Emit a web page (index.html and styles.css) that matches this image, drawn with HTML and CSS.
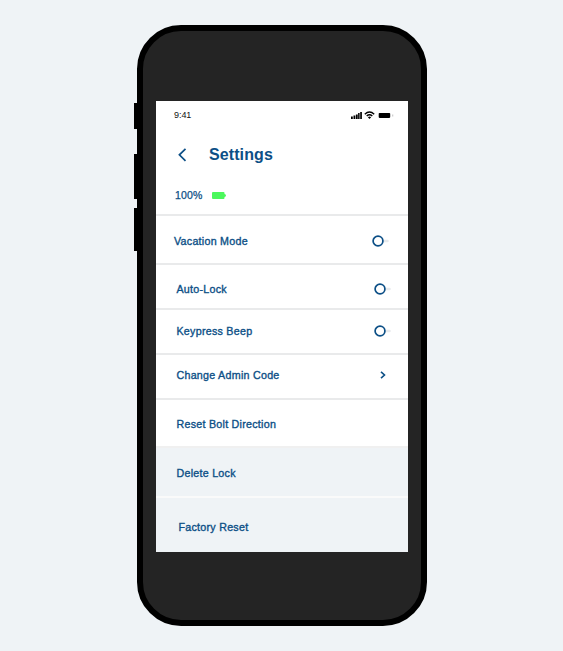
FILE: index.html
```html
<!DOCTYPE html>
<html lang="en">
<head>
<meta charset="utf-8">
<title>Settings</title>
<link rel="stylesheet" href="styles.css">
</head>
<body>
<div class="phone">
  <i class="key key-mute"></i><i class="key key-up"></i><i class="key key-down"></i>
  <main class="screen">
    <div class="status">
      <span class="time">9:41</span>
      <svg class="status-icons" width="43" height="9" viewBox="0 0 43 9">
        <path d="M0 5.500h1.800V8H0zM2.500 4.600h1.800V8H2.500zM4.900 3.500h1.800V8H4.900zM7.100 2.100h1.500V8H7.100zM9.200 1h1.700V8H9.200z"/>
        <g fill="none" stroke="#000" stroke-width="1.400"><path d="M13.800 3.200Q18.500-1 23.200 3.200M15.700 5.100Q18.500 2.600 21.300 5.100"/></g>
        <path d="M16.900 6.200Q18.500 5 20.100 6.200L18.500 7.900z"/>
        <rect x="27.700" y="1.900" width="11.500" height="5" rx=".8"/>
        <path d="M41.300 3.500h.9v2h-.9z" fill="#bbb"/>
      </svg>
    </div>
    <header class="header">
      <svg class="back" width="9" height="14" viewBox="0 0 9 14"><path d="M7.500 .8L1.400 6.800l6.100 6"/></svg>
      <h1>Settings</h1>
    </header>
    <div class="charge">
      <span class="level">100%</span>
      <svg class="battery" width="14" height="7" viewBox="0 0 14 7"><path d="M1 0h10.500q1 0 1 1v.9q1.500.2 1.500 1.500t-1.500 1.500V6q0 1-1 1H1Q0 7 0 6V1Q0 0 1 0z"/></svg>
    </div>
    <div class="row vacation"><span>Vacation Mode</span><svg class="toggle" width="17" height="12" viewBox="0 0 17 12"><path d="M11 6h4.500"/><circle cx="6" cy="6" r="4.900"/></svg></div>
    <div class="row auto"><span>Auto-Lock</span><svg class="toggle" width="17" height="12" viewBox="0 0 17 12"><path d="M11 6h4.500"/><circle cx="6" cy="6" r="4.900"/></svg></div>
    <div class="row keypress"><span>Keypress Beep</span><svg class="toggle" width="17" height="12" viewBox="0 0 17 12"><path d="M11 6h4.500"/><circle cx="6" cy="6" r="4.900"/></svg></div>
    <div class="row code"><span>Change Admin Code</span><svg class="chevron" width="6" height="8" viewBox="0 0 6 8"><path d="M1 .8L4.500 4 1 7.200"/></svg></div>
    <div class="row bolt"><span>Reset Bolt Direction</span></div>
    <div class="row delete"><span>Delete Lock</span></div>
    <div class="row factory"><span>Factory Reset</span></div>
  </main>
</div>
</body>
</html>
```
FILE: styles.css
```css
* { box-sizing: border-box; }
body {
  margin: 0;
  height: 651px;
  overflow: hidden;
  padding: 25px 0 0 136.600px;
  background: #eff3f6;
  font-family: "Liberation Sans", Arial, sans-serif;
  color: #0c4f86;
}
.phone {
  position: relative;
  width: 290.800px;
  height: 600.600px;
  padding: 70px 13px 0 13.400px;
  border: 6px solid #000;
  border-radius: 44px;
  background: #242424;
}
.key { position: absolute; left: -9px; width: 4px; background: #000; }
.key-mute { top: 72px; height: 26px; }
.key-up { top: 122.500px; height: 45px; }
.key-down { top: 177px; height: 43px; }
.screen { width: 252.400px; height: 451px; background: #fff; overflow: hidden; }
.status { display: flex; justify-content: space-between; align-items: center; height: 28px; padding: 0 14px 0 18px; }
.time { font-size: 9px; line-height: 10px; color: #111; letter-spacing: -.05px; }
.header { display: flex; align-items: center; height: 51px; padding-left: 22px; }
.back { fill: none; stroke: currentColor; stroke-width: 1.700; }
h1 { margin: 0 0 0 22px; font-size: 16px; line-height: 18px; font-weight: 700; letter-spacing: .1px; }
.charge { display: flex; align-items: center; height: 34px; padding: 0 0 4px 19px; }
.level { width: 37px; font-size: 10.500px; line-height: 13px; letter-spacing: .15px; -webkit-text-stroke: .25px currentColor; }
.battery { fill: #4bf85c; }
.row {
  display: flex;
  align-items: center;
  justify-content: space-between;
  height: 45px;
  padding: 0 17px 0 20.500px;
  border-top: 2px solid #e9eaeb;
  font-size: 10.700px;
  line-height: 13px;
  letter-spacing: .26px;
  -webkit-text-stroke: .35px currentColor;
}
.vacation { height: 49px; padding: 3px 19.500px 0 18px; }
.vacation .toggle { margin-bottom: 1px; }
.auto { padding-top: 5px; }
.keypress { padding-bottom: 1px; }
.code { padding: 0 22px 3px 20.500px; }
.bolt { height: 48px; padding-top: 2px; }
.delete { height: 50px; padding-top: 2px; background: #eff3f6; border-top-color: #f0f0f0; }
.factory { height: 56px; padding-top: 5px; padding-left: 22.500px; background: #eff3f6; border-top-color: #fafafa; }
.toggle path { stroke: #e8eaec; stroke-width: 2.500; stroke-linecap: round; }
.toggle circle { fill: #fff; stroke: currentColor; stroke-width: 1.700; }
.chevron { fill: none; stroke: currentColor; stroke-width: 1.600; }
```
